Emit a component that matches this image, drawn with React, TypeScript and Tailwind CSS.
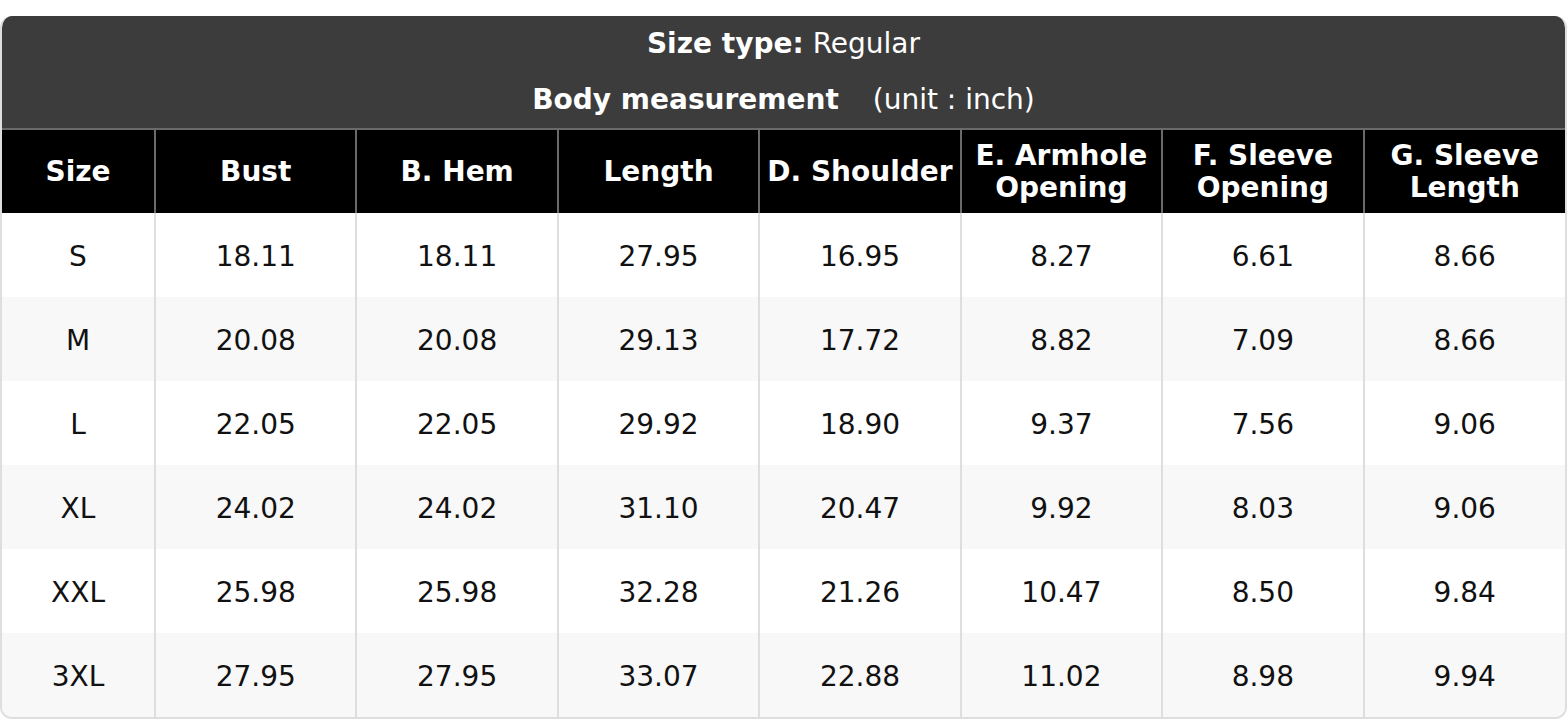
import React from 'react'

const columns = [
  'Size',
  'Bust',
  'B. Hem',
  'Length',
  'D. Shoulder',
  'E. Armhole Opening',
  'F. Sleeve Opening',
  'G. Sleeve Length',
]

const rows = [
  ['S', '18.11', '18.11', '27.95', '16.95', '8.27', '6.61', '8.66'],
  ['M', '20.08', '20.08', '29.13', '17.72', '8.82', '7.09', '8.66'],
  ['L', '22.05', '22.05', '29.92', '18.90', '9.37', '7.56', '9.06'],
  ['XL', '24.02', '24.02', '31.10', '20.47', '9.92', '8.03', '9.06'],
  ['XXL', '25.98', '25.98', '32.28', '21.26', '10.47', '8.50', '9.84'],
  ['3XL', '27.95', '27.95', '33.07', '22.88', '11.02', '8.98', '9.94'],
]

export default function App() {
  return (
    <div className="bg-white pt-4 font-['DejaVu_Sans',sans-serif]">
      <div className="w-[1567px] overflow-hidden rounded-[12px] border-2 border-t-0 border-[#dedede] text-[28px]">
        {/* Title block */}
        <div className="bg-[#3c3c3c] text-white text-center">
          <div className="h-[56px] flex items-center justify-center">
            <span className="font-bold">Size type:</span>
            <span className="ml-[9px]">Regular</span>
          </div>
          <div className="h-[56px] flex items-center justify-center">
            <span className="font-bold">Body measurement</span>
            <span className="ml-[34px]">(unit : inch)</span>
          </div>
        </div>

        <table className="w-full table-fixed border-collapse">
          <colgroup>
            <col className="w-[153px]" />
            {columns.slice(1).map((c) => (
              <col key={c} />
            ))}
          </colgroup>
          <thead>
            <tr className="h-[84px]">
              {columns.map((c, i) => (
                <th
                  key={c}
                  className={
                    'bg-black text-white font-bold leading-[32px] px-1 border-t-2 border-[#6a6a6a] ' +
                    (i === 0 ? '' : 'border-l-2')
                  }
                >
                  {c}
                </th>
              ))}
            </tr>
          </thead>
          <tbody>
            {rows.map((r, ri) => (
              <tr key={r[0]} className={'h-[84px] ' + (ri % 2 === 1 ? 'bg-[#f8f8f8]' : 'bg-white')}>
                {r.map((v, i) => (
                  <td
                    key={i}
                    className={
                      'pt-1 text-center text-[#111] ' + (i === 0 ? '' : 'border-l-2 border-[#dedede]')
                    }
                  >
                    {v}
                  </td>
                ))}
              </tr>
            ))}
          </tbody>
        </table>
      </div>
    </div>
  )
}
